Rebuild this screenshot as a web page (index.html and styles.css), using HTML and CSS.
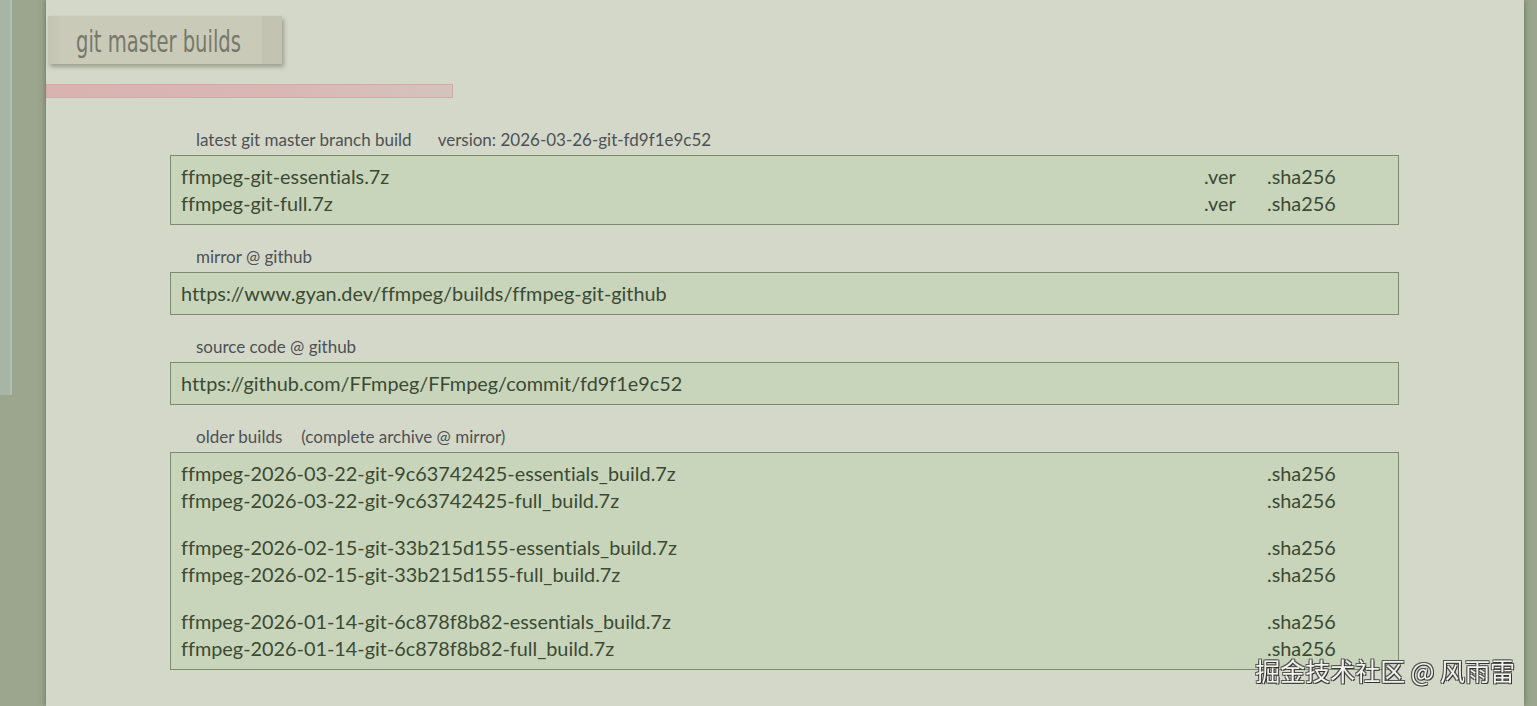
FILE: index.html
```html
<!DOCTYPE html>
<html lang="en">
<head>
    <meta charset="UTF-8">
    <meta name="viewport" content="width=device-width, initial-scale=1.0">
    <title>git master builds</title>
    <link rel="stylesheet" href="styles.css">
</head>
<body>
    <div class="sidebar"></div>
    <div class="page">
        <div class="tab"><span>git master builds</span></div>
        <div class="bar"></div>

        <div class="content">
            <div class="label">latest git master branch build<span class="note">version: 2026-03-26-git-fd9f1e9c52</span></div>
            <div class="box">
                <div class="row"><span>ffmpeg-git-essentials.7z</span><span>.ver</span><span>.sha256</span></div>
                <div class="row"><span>ffmpeg-git-full.7z</span><span>.ver</span><span>.sha256</span></div>
            </div>

            <div class="label">mirror @ github</div>
            <div class="box">
                <div class="row"><span>https://www.gyan.dev/ffmpeg/builds/ffmpeg-git-github</span></div>
            </div>

            <div class="label">source code @ github</div>
            <div class="box">
                <div class="row"><span>https://github.com/FFmpeg/FFmpeg/commit/fd9f1e9c52</span></div>
            </div>

            <div class="label">older builds<span class="note small">(complete archive @ mirror)</span></div>
            <div class="box">
                <div class="group">
                    <div class="row"><span>ffmpeg-2026-03-22-git-9c63742425-essentials_build.7z</span><span></span><span>.sha256</span></div>
                    <div class="row"><span>ffmpeg-2026-03-22-git-9c63742425-full_build.7z</span><span></span><span>.sha256</span></div>
                </div>
                <div class="group">
                    <div class="row"><span>ffmpeg-2026-02-15-git-33b215d155-essentials_build.7z</span><span></span><span>.sha256</span></div>
                    <div class="row"><span>ffmpeg-2026-02-15-git-33b215d155-full_build.7z</span><span></span><span>.sha256</span></div>
                </div>
                <div class="group">
                    <div class="row"><span>ffmpeg-2026-01-14-git-6c878f8b82-essentials_build.7z</span><span></span><span>.sha256</span></div>
                    <div class="row"><span>ffmpeg-2026-01-14-git-6c878f8b82-full_build.7z</span><span></span><span>.sha256</span></div>
                </div>
            </div>
        </div>
    </div>
    <div class="watermark">掘金技术社区 @ 风雨雷</div>
</body>
</html>
```

FILE: styles.css
```css
body {
    margin: 0;
    height: 706px;
    overflow: hidden;
    display: flex;
    align-items: flex-start;
    background-color: #9ca68e;
    font-family: Lato, "Open Sans", sans-serif;
    font-variant-ligatures: none;
}
.sidebar {
    flex: none;
    width: 10px;
    height: 395px;
    background: #a6b5a6;
    border-right: 2px solid #b0bdb0;
}
.page {
    flex: none;
    width: 1478px;
    height: 706px;
    margin-left: 34px;
    background-color: #d4d8c8;
    box-shadow: 0 0 6px rgba(50, 60, 40, 0.55);
}
.tab {
    width: 206px;
    height: 48px;
    margin: 16px 0 0 2px;
    padding-left: 28px;
    display: flex;
    align-items: center;
    white-space: nowrap;
    background: linear-gradient(to right, #c3c4b1 0, #c9cab8 16px, #c9cab8 214px, #c2c3b0 214px);
    box-shadow: 2px 3px 4px rgba(60, 60, 40, 0.35);
}
.tab span {
    display: inline-block;
    font-family: "DejaVu Sans Condensed", "DejaVu Sans", sans-serif;
    font-size: 31px;
    color: #76786b;
    padding-top: 2px;
    transform: scaleX(0.7);
    transform-origin: left center;
}
.bar {
    width: 405px;
    height: 12px;
    margin-top: 20px;
    background: linear-gradient(to right, #d8b3b0, #d9b8b4 60%, #d4c4be);
    border: 1px solid #d2a9a6;
}
.content {
    width: 1229px;
    margin: 32px 0 0 124px;
}
.label {
    height: 20px;
    line-height: 20px;
    padding-left: 26px;
    margin: 22px 0 5px;
    font-size: 17px;
    color: #4d5157;
}
.content .label:first-child {
    margin-top: 0;
}
.note {
    margin-left: 26px;
}
.note.small {
    margin-left: 19px;
}
.box {
    padding: 7px 10px;
    background-color: #c9d5bb;
    border: 1px solid #7c8b6c;
    font-size: 19.85px;
    color: #3a4a33;
}
.row {
    display: grid;
    grid-template-columns: 1fr 63px 121px;
    height: 27px;
    line-height: 27px;
}
.group + .group {
    margin-top: 20px;
}
.watermark {
    position: fixed;
    right: 22px;
    bottom: 18px;
    font-family: "Noto Sans CJK SC", sans-serif;
    font-size: 25px;
    color: #f4f4ee;
    text-shadow: 1px 1px 0 #333, -1px -1px 0 #555, 1px -1px 0 #555, -1px 1px 0 #555;
}
```
